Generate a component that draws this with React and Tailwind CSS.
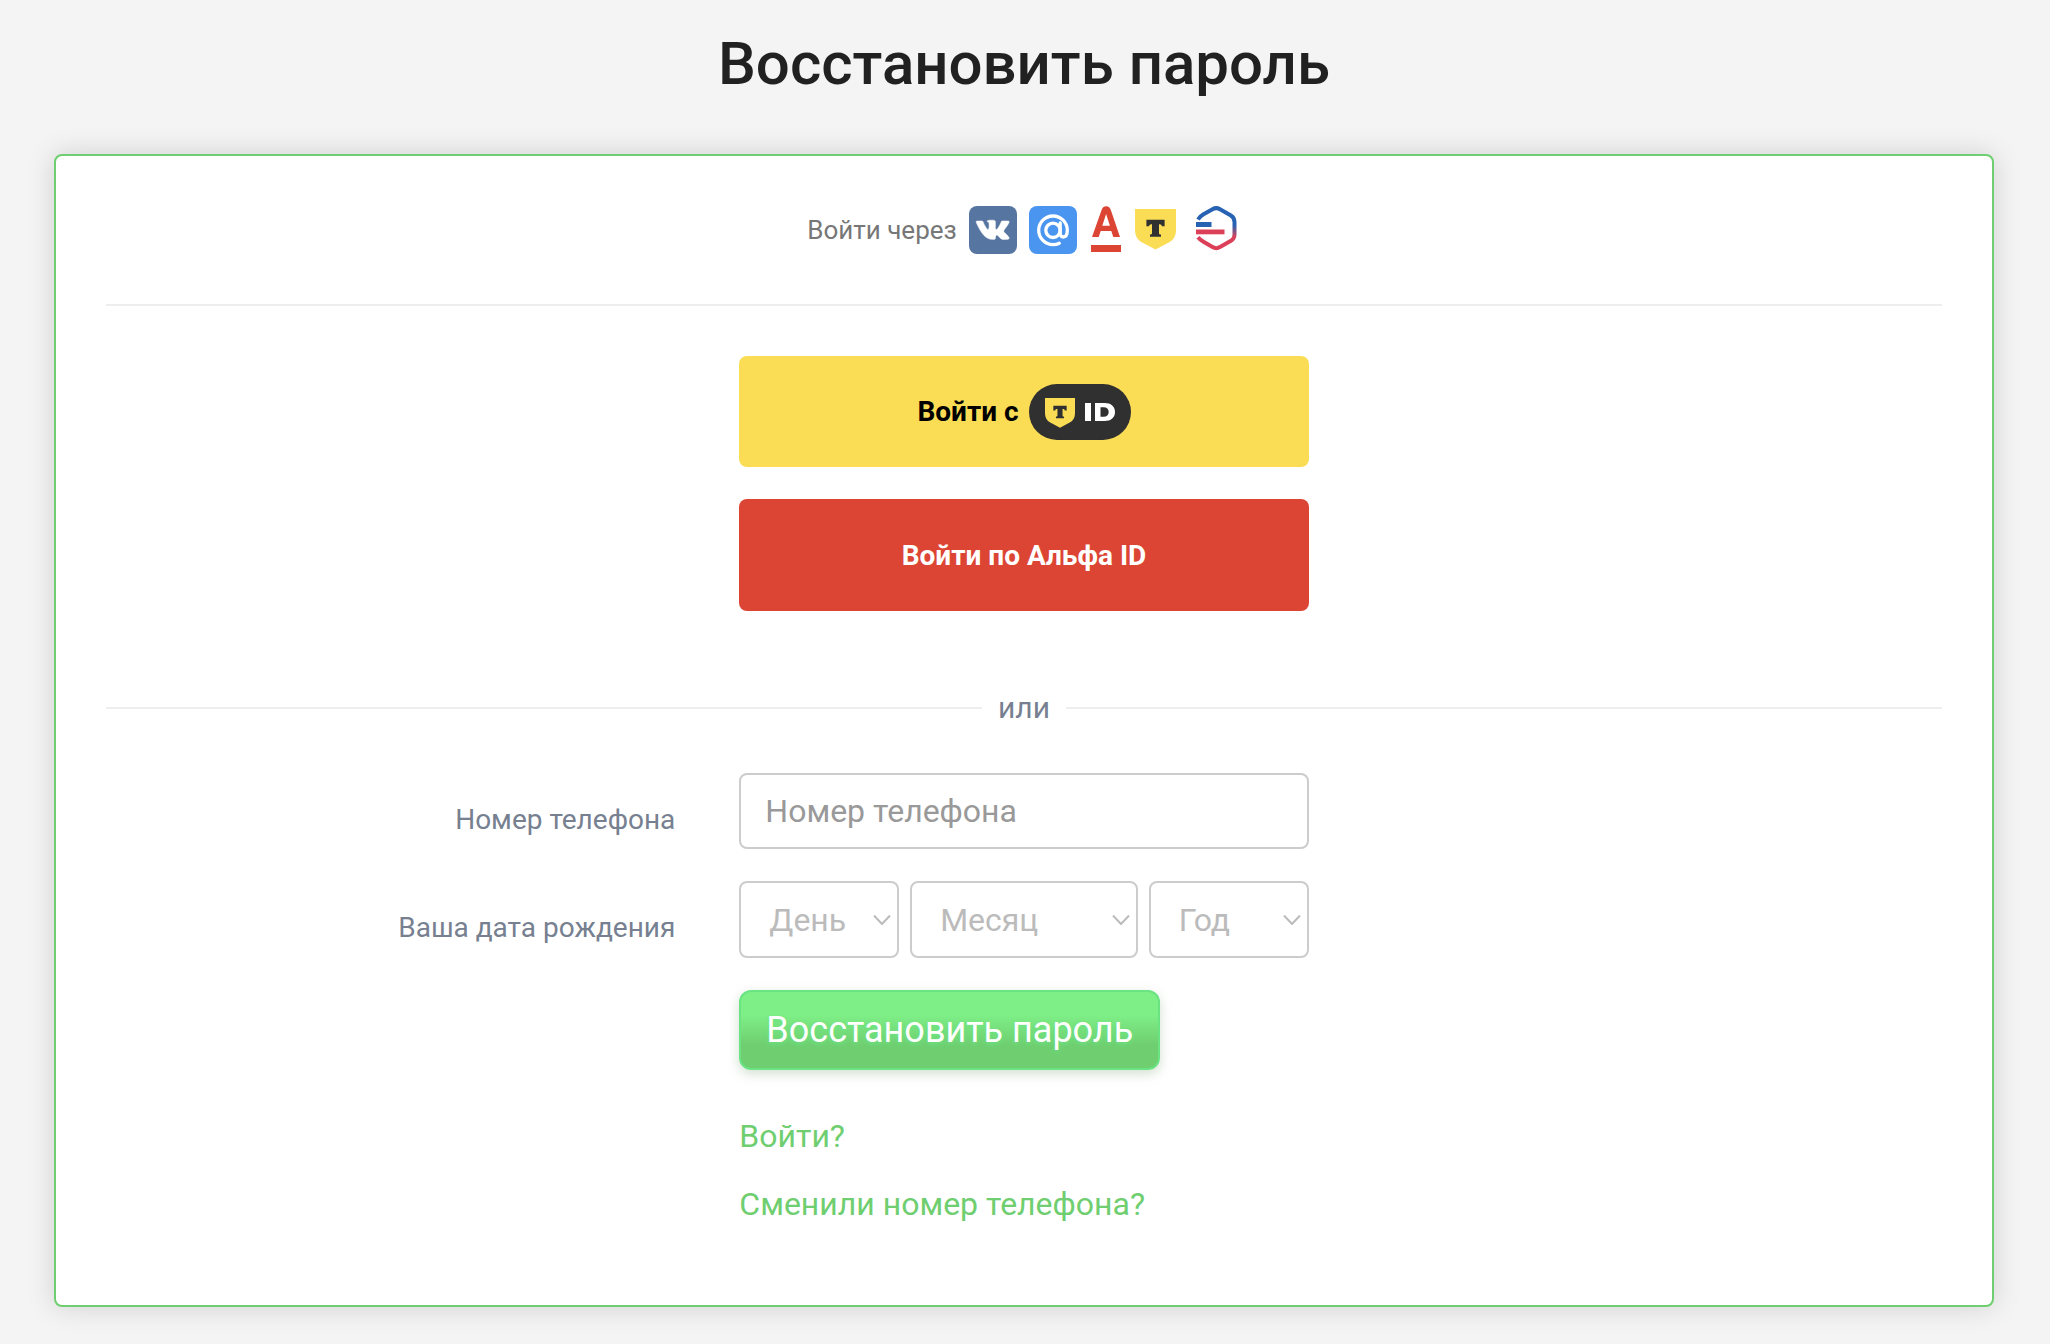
import { useState } from 'react'

const months = [
  'Январь', 'Февраль', 'Март', 'Апрель', 'Май', 'Июнь',
  'Июль', 'Август', 'Сентябрь', 'Октябрь', 'Ноябрь', 'Декабрь',
]
const days = Array.from({ length: 31 }, (_, i) => i + 1)
const years = Array.from({ length: 90 }, (_, i) => 2010 - i)

function VkIcon() {
  return (
    <svg viewBox="0 0 48 48" className="size-12">
      <rect width="48" height="48" rx="8" fill="#5775a1" />
      <path
        transform="translate(7.5 9.5) scale(1.35 1.38)"
        fill="#fff"
        stroke="#fff"
        strokeWidth=".4"
        d="M11.7 17.3h1.45s.44-.05.66-.29c.21-.22.2-.64.2-.64s-.03-1.97.88-2.26c.9-.29 2.05 1.9 3.27 2.74.93.63 1.63.5 1.63.5l3.28-.05s1.71-.11.9-1.46c-.07-.11-.47-1-2.44-2.82-2.05-1.91-1.78-1.6.7-4.9 1.5-2.01 2.1-3.24 1.91-3.76-.18-.5-1.28-.37-1.28-.37l-3.69.02s-.27-.04-.48.09c-.2.12-.33.4-.33.4s-.58 1.56-1.36 2.88c-1.64 2.79-2.3 2.94-2.56 2.76-.62-.4-.47-1.61-.47-2.47 0-2.69.41-3.81-.79-4.1-.4-.1-.69-.16-1.71-.17-1.31-.01-2.41 0-3.04.31-.42.2-.74.66-.54.69.24.03.79.15 1.08.54.37.51.36 1.66.36 1.66s.21 3.16-.51 3.55c-.49.27-1.17-.28-2.62-2.79-.74-1.28-1.3-2.71-1.3-2.71s-.11-.26-.3-.41c-.24-.17-.57-.23-.57-.23l-3.5.02s-.53.02-.72.24c-.17.2-.01.62-.01.62s2.74 6.42 5.85 9.65c2.85 2.97 6.09 2.77 6.09 2.77z"
      />
    </svg>
  )
}

function MailIcon() {
  return (
    <svg viewBox="0 0 48 48" className="size-12" fill="none" stroke="#fff" strokeWidth="3.3">
      <rect width="48" height="48" rx="8" fill="#4a95ef" stroke="none" />
      <circle cx="24" cy="24.3" r="7.2" />
      <path
        d="M31.2 17v9.800c0 2.600 1.200 4.200 3.100 4.200 2.500 0 4-2.500 4-6.700a14.300 14.300 0 1 0-14.300 14.300c2.400 0 4.400-.4 6.300-1.400"
        strokeLinecap="round"
      />
    </svg>
  )
}

function AlfaIcon() {
  return (
    <svg viewBox="0 0 30 48" className="h-12 w-[30px]" fill="#dc4433">
      <path
        fillRule="evenodd"
        d="M10.500 4.300C11.400 1.700 12.700.2 15.200.2s3.800 1.500 4.700 4.100L29 31h-6.700l-2-6H9.700L7.700 31H1zM15.100 8 11.300 19.700h7.600z"
      />
      <rect y="39" width="30" height="7" />
    </svg>
  )
}

function TShield({ className }) {
  return (
    <svg viewBox="0 0 41 41" className={className}>
      <path d="M0 0h41v20.500c0 6.500-2.400 10.400-7.200 13.100L20.500 40.600 7.200 33.600C2.400 30.900 0 27 0 20.500z" fill="#fadd55" />
      <path d="M11.400 10.700h18.200v6.500h-2.600c-.3-1.300-1-2-2.400-2h-.600V24c0 1.100.5 1.600 2 1.600v2.200H15v-2.200c1.500 0 2-.5 2-1.600v-8.800h-.600c-1.400 0-2.100.7-2.400 2h-2.600z" fill="#303030" />
    </svg>
  )
}

function GosIcon() {
  return (
    <svg viewBox="0 0 41 46" className="mb-[2px] h-[46px] w-[41px]" fill="none">
      <defs>
        <linearGradient id="gos" x1="0" y1="0" x2="0" y2="46" gradientUnits="userSpaceOnUse">
          <stop offset=".42" stopColor="#2763b2" />
          <stop offset=".68" stopColor="#dc4058" />
        </linearGradient>
      </defs>
      <path
        d="M2 13.500C3.300 11.300 5 9.800 7.500 8.300L16.500 3.200c2.600-1.500 4.900-1.500 7.500 0l10.500 6c2.600 1.500 4 3.700 4 6.700v12.500c0 3-1.400 5.200-4 6.700L24 41.100c-2.600 1.500-4.900 1.500-7.500 0L7.500 35.800C5 34.300 3.300 33 2 31.300"
        stroke="url(#gos)"
        strokeWidth="4"
      />
      <rect y="16" width="15.500" height="5" fill="#2763b2" />
      <rect y="23.500" width="28.500" height="4.800" fill="#dc4058" />
    </svg>
  )
}

function DateSelect({ label, options, value, onChange }) {
  return (
    <div className="grid items-center">
      <select
        aria-label={label}
        value={value}
        onChange={(e) => onChange(e.target.value)}
        className="col-start-1 row-start-1 h-[77px] w-full appearance-none rounded-lg border-2 border-[#ccc] bg-white pl-7 text-[32px] text-[#bbb]"
      >
        <option value="">{label}</option>
        {options.map((option) => (
          <option key={option} value={option}>{option}</option>
        ))}
      </select>
      <svg
        viewBox="0 0 18 10"
        className="pointer-events-none col-start-1 row-start-1 mr-2 h-[10px] w-[18px] justify-self-end"
        fill="none"
        stroke="#bbb"
        strokeWidth="2"
      >
        <path d="M1 .5 9 9 17 .5" />
      </svg>
    </div>
  )
}

export default function App() {
  const [phone, setPhone] = useState('')
  const [day, setDay] = useState('')
  const [month, setMonth] = useState('')
  const [year, setYear] = useState('')

  return (
    <div className="min-h-screen bg-[#f4f4f4] pt-6 pr-14 pb-9 pl-[54px] font-[Roboto,sans-serif]">
      <h1 className="text-center text-[60px] leading-[80px] font-medium text-[#212121]">Восстановить пароль</h1>

      <main className="mt-[50px] rounded-lg border-2 border-[#6fce70] bg-white px-[50px] pt-[50px] pb-[77px] shadow-[0_0_28px_rgba(0,0,0,0.15)]">
        {/* Social logins */}
        <div className="flex h-12 items-center justify-center pr-1">
          <span className="mr-3 text-[26px] text-[#777]">Войти через</span>
          <a href="#vk" aria-label="ВКонтакте" className="mr-3"><VkIcon /></a>
          <a href="#mail" aria-label="Mail.ru" className="mr-[14px]"><MailIcon /></a>
          <a href="#alfa" aria-label="Альфа ID" className="mr-[14px]"><AlfaIcon /></a>
          <a href="#tid" aria-label="T ID" className="mr-5"><TShield className="mb-[2px] size-[41px]" /></a>
          <a href="#gosuslugi" aria-label="Госуслуги"><GosIcon /></a>
        </div>

        <hr className="mt-[50px] border-t-2 border-[#eee]" />

        <div className="-mx-8 mt-[50px] grid grid-cols-3">
          <div className="col-start-2 flex flex-col gap-8 px-8">
            <button type="button" className="flex h-[111px] items-center justify-center gap-[10px] rounded-lg bg-[#fadd55] text-[28px] font-bold text-black">
              Войти с
              <span className="flex h-14 items-center gap-[10px] rounded-full bg-[#303030] px-4 text-white">
                <TShield className="mt-[2px] size-[30px]" />
                <svg viewBox="0 0 30 18" className="h-[18px] w-[30px]" fill="#fff" aria-label="ID">
                  <rect width="6" height="18" />
                  <path
                    fillRule="evenodd"
                    d="M10 0h9.500C26 0 30 3.400 30 9s-4 9-10.500 9H10zM15.500 4.300v9.400h3.200c3 0 5-1.700 5-4.700s-2-4.700-5-4.700z"
                  />
                </svg>
              </span>
            </button>
            <button type="button" className="h-28 rounded-lg bg-[#dc4433] pt-[2px] text-[28px] font-bold text-white">
              Войти по Альфа ID
            </button>
          </div>
        </div>

        <div className="mt-[78px] flex items-center gap-4 text-[30px] leading-[38px] text-[#768090]">
          <div className="h-[2px] flex-1 bg-[#eee]" />
          или
          <div className="h-[2px] flex-1 bg-[#eee]" />
        </div>

        <form className="-mx-8 mt-[46px] grid grid-cols-3 gap-y-8" onSubmit={(e) => e.preventDefault()}>
          <label htmlFor="phone" className="px-8 pt-[26px] text-right text-[28px] leading-[42px] text-[#768090]">
            Номер телефона
          </label>
          <div className="px-8">
            <input
              id="phone"
              type="tel"
              placeholder="Номер телефона"
              value={phone}
              onChange={(e) => setPhone(e.target.value)}
              className="block h-[76px] w-full rounded-lg border-2 border-[#ccc] bg-white px-6 text-[32px] text-[#333] placeholder:text-[#999]"
            />
          </div>

          <span className="col-start-1 px-8 pt-[26px] text-right text-[28px] leading-[42px] text-[#768090]">
            Ваша дата рождения
          </span>
          <div className="grid grid-cols-[160fr_228fr_160fr] gap-[11px] px-8">
            <DateSelect label="День" options={days} value={day} onChange={setDay} />
            <DateSelect label="Месяц" options={months} value={month} onChange={setMonth} />
            <DateSelect label="Год" options={years} value={year} onChange={setYear} />
          </div>

          <div className="col-start-2 flex flex-col items-start px-8">
            <button
              type="submit"
              className="h-20 rounded-xl border-2 border-[#6ae383] bg-linear-to-b from-[#7eef87] from-30% to-[#6fce70] to-70% px-[25px] text-[36px] whitespace-nowrap text-white shadow-[0_4px_12px_rgba(80,130,70,0.25)] text-shadow-[0_2px_4px_#6ae383]"
            >
              Восстановить пароль
            </button>
            <a href="#login" className="mt-[42px] text-[32px] leading-12 text-[#6fce70]">Войти?</a>
            <a href="#change-phone" className="mt-5 text-[32px] leading-12 whitespace-nowrap text-[#6fce70]">Сменили номер телефона?</a>
          </div>
        </form>
      </main>
    </div>
  )
}
